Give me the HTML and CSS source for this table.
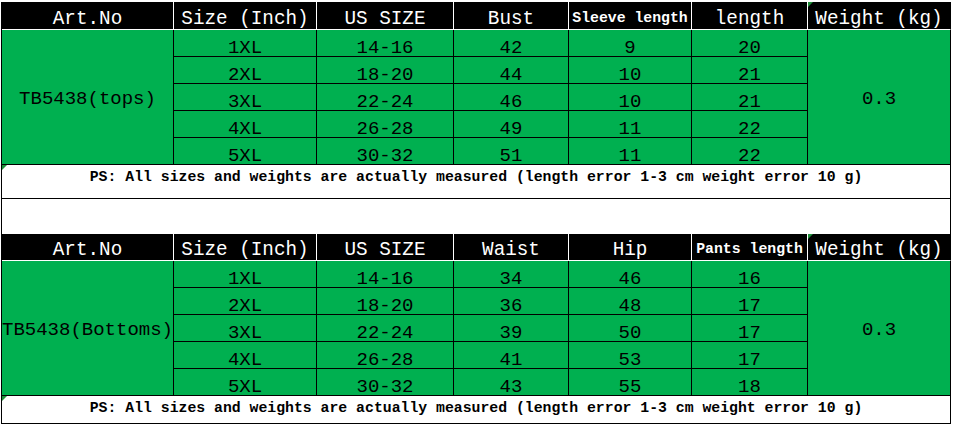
FILE: index.html
```html
<!DOCTYPE html>
<html>
<head>
<meta charset="utf-8">
<link rel="stylesheet" href="styles.css">
</head>
<body>
<div class="sheet">
  <div class="tbl tbl-top">
    <div class="cell hd">Art.No</div>
    <div class="cell hd">Size (Inch)</div>
    <div class="cell hd">US SIZE</div>
    <div class="cell hd">Bust</div>
    <div class="cell hd hd-sm">Sleeve length</div>
    <div class="cell hd">length</div>
    <div class="cell hd hd-last flag">Weight (kg)</div>

    <div class="cell art">TB5438(tops)</div>
    <div class="cell d">1XL</div><div class="cell d">14-16</div><div class="cell d">42</div><div class="cell d">9</div><div class="cell d">20</div>
    <div class="cell wt">0.3</div>
    <div class="cell d">2XL</div><div class="cell d">18-20</div><div class="cell d">44</div><div class="cell d">10</div><div class="cell d">21</div>
    <div class="cell d">3XL</div><div class="cell d">22-24</div><div class="cell d">46</div><div class="cell d">10</div><div class="cell d">21</div>
    <div class="cell d">4XL</div><div class="cell d">26-28</div><div class="cell d">49</div><div class="cell d">11</div><div class="cell d">22</div>
    <div class="cell d">5XL</div><div class="cell d">30-32</div><div class="cell d">51</div><div class="cell d">11</div><div class="cell d">22</div>

    <div class="cell ps flag">PS: All sizes and weights are actually measured (length error 1-3 cm weight error 10 g)</div>
  </div>
  <div class="blank"></div>
  <div class="tbl tbl-bottom">
    <div class="cell hd">Art.No</div>
    <div class="cell hd">Size (Inch)</div>
    <div class="cell hd">US SIZE</div>
    <div class="cell hd">Waist</div>
    <div class="cell hd">Hip</div>
    <div class="cell hd hd-sm">Pants length</div>
    <div class="cell hd hd-last flag">Weight (kg)</div>

    <div class="cell art">TB5438(Bottoms)</div>
    <div class="cell d">1XL</div><div class="cell d">14-16</div><div class="cell d">34</div><div class="cell d">46</div><div class="cell d">16</div>
    <div class="cell wt">0.3</div>
    <div class="cell d">2XL</div><div class="cell d">18-20</div><div class="cell d">36</div><div class="cell d">48</div><div class="cell d">17</div>
    <div class="cell d">3XL</div><div class="cell d">22-24</div><div class="cell d">39</div><div class="cell d">50</div><div class="cell d">17</div>
    <div class="cell d">4XL</div><div class="cell d">26-28</div><div class="cell d">41</div><div class="cell d">53</div><div class="cell d">17</div>
    <div class="cell d">5XL</div><div class="cell d">30-32</div><div class="cell d">43</div><div class="cell d">55</div><div class="cell d">18</div>

    <div class="cell ps flag">PS: All sizes and weights are actually measured (length error 1-3 cm weight error 10 g)</div>
  </div>
</div>
</body>
</html>
```

FILE: styles.css
```css
* { box-sizing: border-box; }
html, body { margin: 0; padding: 0; background: #fff; }
body {
  font-family: "Liberation Mono", "Noto Sans CJK SC", monospace;
  color: #000;
}
.sheet {
  width: 954px;
  padding: 2px 0 0 1px;
}
.tbl {
  display: grid;
  width: 950px;
  grid-template-columns: 172px 143px 137px 115px 123px 116px 143px;
  border-left: 1px solid #000;
}
.tbl-top { grid-template-rows: 28px repeat(5, 27px) 34px; }
.tbl-bottom { grid-template-rows: 27px repeat(5, 27px) 28px; }
.cell {
  display: flex;
  justify-content: center;
  white-space: nowrap;
  border-right: 1px solid #000;
  border-bottom: 1px solid #000;
}
.hd {
  background: #000;
  color: #fff;
  border-right-color: #fff;
  border-bottom-color: #fff;
  font-size: 19.3px;
  line-height: 16px;
  align-items: flex-end;
  padding-bottom: 2px;
}
.hd-sm {
  font-size: 14.8px;
  font-weight: bold;
  line-height: 16px;
  padding-bottom: 3px;
}
.hd-last { border-right-color: #000; }
.d {
  background: #00b050;
  font-size: 19px;
  line-height: 16px;
  align-items: flex-end;
  padding-bottom: 0;
}
.art, .wt {
  grid-row: 2 / span 5;
  background: #00b050;
  font-size: 19px;
  align-items: center;
  padding-top: 4px;
}
.art { grid-column: 1; }
.wt { grid-column: 7; }
.ps {
  grid-column: 1 / -1;
  background: #fff;
  font-size: 14.8px;
  font-weight: bold;
  line-height: 18px;
  align-items: flex-start;
  padding-top: 3px;
}
.blank {
  width: 950px;
  height: 35px;
  border-left: 1px solid #000;
  border-right: 1px solid #000;
}
.flag { position: relative; }
.flag::before {
  content: "";
  position: absolute;
  left: 0;
  top: 0;
  border-top: 5px solid #1f8f3a;
  border-right: 5px solid transparent;
}
```
